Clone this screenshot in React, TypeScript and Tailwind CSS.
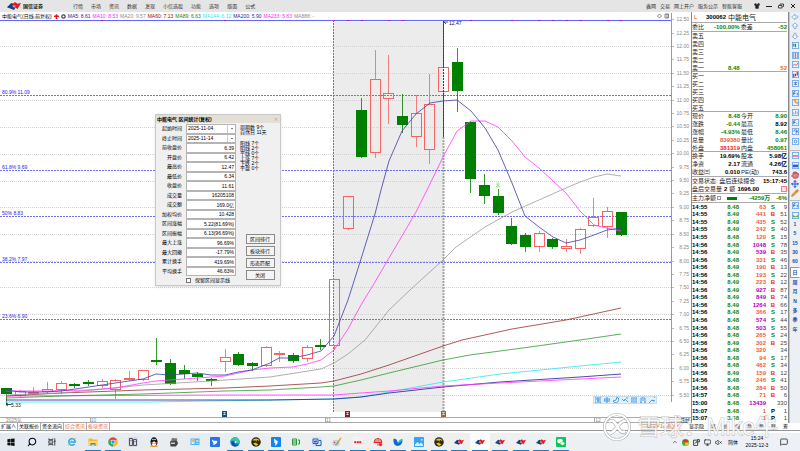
import { ReactNode } from "react";
import {
  ArrowBigDown,
  ArrowBigLeft,
  ArrowBigUp,
  ChevronUp,
  Hand,
  MessageSquare,
  Monitor,
  Move,
  Pencil,
  Search,
  Shirt,
  VolumeX,
} from "lucide-react";

const leftMenu = ["行情", "市场", "资讯", "数据", "发现", "小信选股", "功能", "选项", "版面", "公式"];
const rightMenu = ["鑫网", "交易", "网上开户", "服务公示", "智能客服"];

const averages = [
  { label: "MA5: 8.61", color: "text-[#1c1c96]" },
  { label: "MA10: 8.53", color: "text-[#ff1cff]" },
  { label: "MA20: 9.57", color: "text-[#8c8c8c]" },
  { label: "MA60: 7.13", color: "text-[#8e1010]" },
  { label: "MA89: 6.63", color: "text-[#0c860c]" },
  { label: "MA144: 6.12", color: "text-[#18f0f0]" },
  { label: "MA200: 5.90", color: "text-[#1c1c96]" },
  { label: "MA233: 5.83", color: "text-[#ff1cff]" },
  { label: "MA888: -", color: "text-[#8c8c8c]" },
];

// up, body top, body bottom, high, low
const candles: [boolean, number, number, number, number][] = [
  [false, 388, 394, 388, 404],
  [true, 391, 396, 390, 397],
  [true, 392, 394, 387, 395],
  [true, 389, 392, 382, 394],
  [true, 383, 390, 381, 394],
  [false, 384, 386, 383, 388],
  [false, 382, 384, 380, 386],
  [true, 381, 386, 379, 388],
  [true, 380, 390, 379, 399],
  [true, 378, 379, 371, 381],
  [true, 370, 380, 370, 381],
  [false, 360, 362, 338, 365],
  [false, 363, 384, 359, 385],
  [false, 370, 374, 365, 379],
  [false, 374, 377, 372, 381],
  [false, 379, 381, 378, 386],
  [true, 357, 362, 349, 372],
  [false, 354, 365, 352, 366],
  [false, 363, 366, 362, 371],
  [true, 347, 366, 346, 367],
  [true, 353, 355, 351, 362],
  [false, 355, 361, 353, 363],
  [true, 347, 359, 345, 362],
  [false, 345, 347, 339, 350],
  [true, 279, 346, 279, 350],
  [true, 196, 229, 196, 230],
  [false, 110, 157, 98, 158],
  [true, 79, 153, 50, 158],
  [true, 93, 99, 55, 124],
  [false, 116, 125, 94, 133],
  [true, 113, 137, 95, 147],
  [true, 104, 150, 74, 164],
  [true, 67, 92, 21, 137],
  [false, 62, 91, 48, 112],
  [false, 122, 179, 121, 193],
  [false, 185, 196, 174, 204],
  [false, 196, 213, 189, 215],
  [false, 226, 244, 218, 245],
  [false, 235, 247, 233, 252],
  [true, 233, 247, 231, 252],
  [false, 239, 247, 238, 249],
  [true, 246, 249, 239, 252],
  [true, 229, 249, 228, 254],
  [true, 217, 226, 198, 227],
  [true, 211, 227, 207, 238],
  [false, 212, 235, 212, 236],
];

const maLines = [
  { color: "#28e8f0", points: "6,402 150,402 270,400 334,399 361,397 389,392 443,382 500,374 580,366 621,362" },
  { color: "#1c1c96", points: "6,400 150,400 270,400 334,399 361,397 389,393 443,387 500,382 580,377 621,374" },
  { color: "#ff38ff", points: "6,396 225,395 334,395 361,393 389,391 443,386 500,383 560,380 621,377" },
  { color: "#2f9a2f", points: "6,398 61,396 143,394 225,391 270,390 321,387 334,386 361,380 389,373 443,360 470,355 530,347 580,340 621,334" },
  { color: "#9c3030", points: "6,396 61,393 143,390 225,388 270,386 321,383 334,381 361,374 389,365 443,346 462,340 512,329 566,320 621,308" },
  {
    color: "#9a9a9a",
    points:
      "6,395 61,393 115,388 143,385 211,381 270,377 321,369 334,363 348,354 365,340 389,310 410,290 443,260 456,247 485,227 512,212 539,200 566,188 580,182 594,177 607,174 621,176",
  },
  {
    color: "#ff38ff",
    points:
      "6,391 47,391 88,390 115,388 143,383 156,381 184,379 211,377 225,376 252,370 270,368 293,367 307,364 321,360 334,350 348,329 361,305 375,282 389,258 402,236 416,212 427,190 443,157 457,131 471,121 485,121 498,127 512,141 525,157 539,168 553,181 566,193 580,211 594,225 607,228 621,231",
  },
  {
    color: "#3c3ca4",
    points:
      "6,390 20,392 47,392 61,391 75,389 102,385 129,381 143,379 156,374 170,375 197,373 211,375 225,375 238,372 252,370 270,363 279,358 293,358 307,355 321,351 334,336 348,300 361,259 375,214 381,190 389,161 402,131 416,114 430,103 443,101 457,100 471,111 485,128 498,150 512,183 525,216 539,227 553,237 566,243 580,240 594,235 607,230 621,228",
  },
];

const fibs = [
  { y: 95, label: "80.9% 11.09" },
  { y: 170, label: "61.8% 9.69" },
  { y: 216, label: "50% 8.83" },
  { y: 262, label: "38.2% 7.97" },
  { y: 319, label: "23.6% 6.90" },
];

const gridLines = [46, 73, 100, 127, 154, 181, 207, 234, 261, 287, 314, 341, 368, 395];
const topDots = [101, 224, 333, 347, 361, 388, 402, 470, 511, 538, 552, 566, 580, 607, 620];
const prices = Array.from({ length: 29 }, (_, i) => (12.5 - i * 0.25).toFixed(2));

const stats = [
  ["前收盘价", "6.39"],
  ["开盘价", "6.42"],
  ["最高价", "12.47"],
  ["最低价", "6.34"],
  ["收盘价", "11.61"],
  ["成交量", "16205108"],
  ["成交额", "169.0亿"],
  ["加权均价", "10.428"],
  ["区间涨幅", "5.22(81.69%)"],
  ["区间振幅", "6.13(96.69%)"],
  ["最大上涨", "96.69%"],
  ["最大回撤", "-17.79%"],
  ["累计换手", "419.69%"],
  ["平均换手", "46.63%"],
];

const quotes = [
  ["现价", "8.48", "text-[#0a860a]", "今开", "8.90", "text-[#0a860a]"],
  ["涨跌", "-0.44", "text-[#0a860a]", "最高", "8.92", "text-black"],
  ["涨幅", "-4.93%", "text-[#0a860a]", "最低", "8.46", "text-[#0a860a]"],
  ["总量", "839380", "text-[#f0622a]", "量比", "0.97", "text-[#0a860a]"],
  ["外盘", "381319", "text-[#f01c1c]", "内盘", "458061", "text-[#0a860a]"],
];

const basics = [
  ["换手", "19.69%", "text-black", "股本", "5.98亿", "text-black"],
  ["净资", "2.17", "text-black", "流通", "4.26亿", "text-black"],
  ["收益㈢", "0.010", "text-black", "PE(动)", "743.6", "text-black"],
];

const ticks: [string, string, number, string, number][] = [
  ["14:55", "8.48", 63, "S", 9],
  ["14:55", "8.49", 441, "B", 51],
  ["14:55", "8.49", 435, "S", 52],
  ["14:55", "8.49", 242, "S", 40],
  ["14:55", "8.48", 120, "S", 15],
  ["14:56", "8.48", 1048, "S", 78],
  ["14:56", "8.49", 539, "B", 35],
  ["14:56", "8.48", 331, "S", 46],
  ["14:56", "8.49", 190, "B", 13],
  ["14:56", "8.48", 193, "S", 22],
  ["14:56", "8.49", 223, "B", 12],
  ["14:56", "8.49", 927, "B", 87],
  ["14:56", "8.49", 849, "B", 74],
  ["14:56", "8.49", 1264, "B", 66],
  ["14:56", "8.48", 366, "S", 17],
  ["14:56", "8.48", 574, "S", 44],
  ["14:56", "8.48", 503, "S", 55],
  ["14:56", "8.48", 265, "S", 24],
  ["14:56", "8.49", 302, "B", 25],
  ["14:56", "8.48", 320, "", 34],
  ["14:56", "8.48", 94, "S", 17],
  ["14:56", "8.48", 462, "S", 34],
  ["14:56", "8.49", 159, "B", 12],
  ["14:56", "8.48", 246, "S", 41],
  ["14:56", "8.48", 284, "B", 50],
  ["14:57", "8.48", 71, "B", 6],
  ["15:00", "8.48", 13439, "", 330],
  ["15:07", "8.48", 1, "P", 1],
  ["15:07", "8.48", 1, "P", 1],
];

const sideColor: Record<string, string> = {
  S: "text-[#0a860a]",
  B: "text-[#f01c1c]",
  P: "text-black",
};

const BrandMark = ({ className }: { className: string }) => (
  <svg viewBox="0 0 16 9" className={className}>
    <path d="M0 6 5 1l3 1-1 3 3 1-2 3z" fill="#17427f" />
    <path d="M6 3 9 0l3 2 4-1-4 7-3-2z" fill="#e31b23" />
    <path d="m7 3 3 1-1 3-3-2z" fill="#fff" opacity=".35" />
  </svg>
);

const TitleBar = () => (
  <header className="flex h-3 items-center bg-[#e5e5e5] text-[5px] leading-none text-[#333]">
    <BrandMark className="ml-1.5 h-2 w-4" />
    <span className="ml-px w-[50px] font-bold text-[#222]">国信证券</span>
    <nav className="flex gap-2">
      {leftMenu.map((item) => (
        <a key={item} href="#">
          {item}
        </a>
      ))}
    </nav>
    <nav className="ml-auto mr-3 flex gap-1">
      {rightMenu.map((item) => (
        <a key={item} href="#">
          {item}
        </a>
      ))}
    </nav>
    <div className="mr-1 flex items-center gap-1.5">
      <button aria-label="皮肤">
        <Shirt className="size-1.5 fill-[#222]" />
      </button>
      <button aria-label="最小化">
        <svg viewBox="0 0 6 6" className="size-1.5" stroke="#222">
          <path d="M0 3.5h6" />
        </svg>
      </button>
      <button aria-label="还原">
        <svg viewBox="0 0 6 6" className="size-1.5" stroke="#222" fill="none" strokeWidth=".8">
          <path d="M.5 2.500h3.500v2.500h-3.500zM2 2V1h3.500v2.500H4.500" />
        </svg>
      </button>
      <button aria-label="关闭">
        <svg viewBox="0 0 6 6" className="size-1.5" stroke="#222">
          <path d="m1 1 4 4M5 1 1 5" />
        </svg>
      </button>
    </div>
  </header>
);

const KLineChart = () => (
  <svg viewBox="0 20 671 397" className="block w-full">
    <rect x="333" y="22" width="111" height="390" fill="#ececec" />
    {gridLines.map((y) => (
      <path key={y} d={`M0 ${y + 0.5}H671`} stroke="#c9c9c9" strokeWidth=".8" strokeDasharray="1 1" />
    ))}
    {fibs.map(({ y, label }) => (
      <g key={y}>
        <path d={`M0 ${y + 0.5}H671`} stroke="#7070f4" strokeDasharray="2 1" />
        <text x="2" y={y - 1} fontSize="5" fill="#2424ee">
          {label}
        </text>
      </g>
    ))}
    <path d="M0 20.500H671" stroke="#6464ff" />
    {topDots.map((x) => (
      <rect key={x} x={x} y="20" width="2" height="1" fill="#c000e0" />
    ))}
    <path d="M333.500 20V412" stroke="#777" strokeDasharray="2 1" />
    <path d="M443.500 137V412" stroke="#888" strokeWidth="2" strokeDasharray="2 1" opacity=".7" />
    {candles.map(([up, top, bottom, high, low], i) => {
      const x = Math.round(6 + i * 13.66);
      const color = up ? "#f46464" : "#008000";
      return (
        <g key={i} stroke={color} strokeWidth="1">
          <path d={`M${x + 0.5} ${high}V${top}M${x + 0.5} ${bottom}V${low}`} opacity=".8" />
          <rect
            x={x - 4.5}
            y={top + 0.5}
            width="10"
            height={Math.max(bottom - top - 1, 1)}
            fill={up ? "none" : color}
          />
        </g>
      );
    })}
    <path d="M443.500 21V67M443.500 93V137" stroke="#d42020" />
    <path d="M443.500 21V137" stroke="#8c2020" strokeDasharray="2 1" />
    {maLines.map(({ color, points }) => (
      <polyline key={points} points={points} fill="none" stroke={color} strokeWidth=".8" />
    ))}
    <path d="M444 22h4M444 22l2 2" stroke="#222" strokeWidth=".8" />
    <text x="449" y="25" fontSize="5" fill="#111">
      12.47
    </text>
    <path d="M6 404.500h5M6 404.500l2-1.500M6 404.500l2 1.500" stroke="#222" strokeWidth=".8" fill="none" />
    <text x="11" y="407" fontSize="5" fill="#111">
      5.33
    </text>
    <g stroke="#70f070" fill="none" strokeWidth=".8">
      <circle cx="498" cy="184" r="1.200" />
      <path d="m496 187 2-2 2 2z" />
    </g>
    {[
      [222, "#1d4a7c"],
      [345, "#8c1c24"],
      [441, "#9a6838"],
    ].map(([x, fill]) => (
      <g key={x}>
        <rect x={x} y="411" width="5" height="6" fill={fill as string} />
        <path d={`M${Number(x) + 1} 412.500h3M${Number(x) + 1} 414.500h3M${Number(x) + 2.5} 412v3`} stroke="#fff" strokeWidth=".5" />
      </g>
    ))}
  </svg>
);

const StatsDialog = () => (
  <section className="absolute left-[155px] top-[94px] flex w-[126px] flex-col border border-[#c8c8c8] bg-[#f0f0f0] text-[5px] leading-none text-black shadow-sm">
    <h2 className="flex h-2 items-center justify-between bg-[#e4dfd6] px-px font-bold">
      中能电气 区间统计(复权)
      <button aria-label="关闭窗口" className="pr-px font-normal text-[#aaa]">
        ✕
      </button>
    </h2>
    <div className="flex">
      <div className="grid h-[153px] w-[80px] auto-rows-fr grid-cols-[26px_50px] gap-x-1 pt-px">
        {[
          ["起始时间", "2025-11-04"],
          ["终止时间", "2025-11-14"],
        ].map(([label, value]) => (
          <label key={label} className="col-span-2 grid grid-cols-subgrid items-center text-right">
            {label}
            <span className="relative flex h-full border border-[#b4b4b4] bg-white">
              <select className="w-full appearance-none pl-px text-[5px] leading-none">
                <option>{value}</option>
              </select>
              <i className="pointer-events-none absolute inset-y-0 right-0 flex w-2 items-center justify-center border-l border-[#ccc]">
                <svg viewBox="0 0 4 2" className="h-px w-0.5">
                  <path d="M0 0h4L2 2z" />
                </svg>
              </i>
            </span>
          </label>
        ))}
        {stats.map(([label, value]) => (
          <label key={label} className="col-span-2 grid grid-cols-subgrid items-center text-right">
            {label}
            <input
              readOnly
              defaultValue={value}
              className="h-full w-full min-w-0 border border-[#b4b4b4] bg-white px-px text-right text-[5px] leading-none"
            />
          </label>
        ))}
      </div>
      <div className="flex flex-1 flex-col pl-1 pt-0.5">
        <p>周期数 9个</p>
        <p>自然日 11天</p>
        <div className="mt-1.5">
          {["阳线 7个", "阴线 2个", "平线 0个", "上涨 7个", "下跌 2个", "平盘 0个"].map((line) => (
            <p key={line}>{line}</p>
          ))}
        </div>
        <div className="mt-auto flex w-[29px] translate-y-1 flex-col gap-0.5 self-center">
          {["区间排行", "板块排行", "形态匹配", "关闭"].map((item) => (
            <button key={item} className="h-2.5 border border-[#8a8a8a] bg-[#f4f4f4]">
              {item}
            </button>
          ))}
        </div>
      </div>
    </div>
    <label className="flex h-[9px] items-center gap-1 pl-[30px]">
      <input type="checkbox" className="size-[5px] appearance-none border border-[#777] bg-white" />
      保留区间显示线
    </label>
  </section>
);

const DrawTools = () => (
  <div className="absolute bottom-[13px] right-[14px] flex h-2 items-center gap-[3px] border border-[#c4dcf4] bg-[#e4f1fd] px-px">
    {[
      "M0 0h6v6H0zM1 2h4M2 4h3M3 1v4",
      "M3 0v6M0 2h6v2H0z",
      "M4 0a3 3 0 1 1-4 4 4 4 0 0 0 4-4",
      "M0 2l2 2 1-2 3 3M4 1h2",
      "M0 1h6v4H0zM1 3h4",
      "M1 6V1h4v5M2 3h2M0 6h2M4 6h2",
      "M0 6l3-3M3 3a2 2 0 1 0 2-3M3 3l2 1",
    ].map((d) => (
      <svg key={d} viewBox="0 0 6 6" className="size-1.5" fill="none" stroke="#3b8ee0" strokeWidth=".9">
        <path d={d} />
      </svg>
    ))}
  </div>
);

const QuoteRows = ({ rows }: { rows: string[][] }) => (
  <>
    {rows.map(([a, av, ac, b, bv, bc]) => (
      <div key={a} className="flex h-2 items-center whitespace-nowrap">
        <span className="flex w-[48px] justify-between">
          {a}
          <b className={ac}>{av}</b>
        </span>
        <span className="ml-px flex flex-1 justify-between">
          {b}
          <b className={bc}>{bv}</b>
        </span>
      </div>
    ))}
  </>
);

const QuotePanel = () => (
  <aside className="flex w-[98px] shrink-0 flex-col border-x border-[#8c8c8c] pr-px text-[6px] leading-none text-[#222]">
    <h1 className="flex h-[11px] items-center border-b border-[#aaa] pl-0.5">
      <span className="w-3 text-[#f03c3c]">L</span>
      <b className="mr-0.5 text-black">300062</b>
      <span className="text-[7px]">中能电气</span>
    </h1>
    <div className="flex h-[9px] items-center border-b border-[#aaa]">
      委比
      <b className="ml-2.5 mr-px text-[#0a860a]">-100.00%</b>
      委差
      <b className="ml-auto text-[#0a860a]">-52</b>
    </div>
    <div className="h-10 border-b border-[#aaa]">
      {["五", "四", "三", "二", "一"].map((n) => (
        <div key={n} className="flex h-2 items-center">
          <span className="w-[36px]">卖{n}</span>
          {n === "一" && (
            <>
              <b className="flex-1 text-[#0a860a]">8.48</b>
              <b className="text-[#f0622a]">52</b>
            </>
          )}
        </div>
      ))}
    </div>
    <div className="h-10 border-b border-[#aaa]">
      {["一", "二", "三", "四", "五"].map((n) => (
        <div key={n} className="flex h-2 items-center">
          买{n}
        </div>
      ))}
    </div>
    <div className="h-10 border-b border-[#aaa]">
      <QuoteRows rows={quotes} />
    </div>
    <div className="border-b border-[#aaa]">
      <QuoteRows rows={basics} />
    </div>
    <div className="border-b border-[#aaa]">
      <p className="flex h-2 items-center justify-between whitespace-nowrap">
        交易状态: 盘后连续撮合 <b className="text-black">15:17:45</b>
      </p>
      <p className="flex h-2 items-center gap-0.5">
        盘后交易量 <b className="text-black">2</b> 额 <b className="text-black">1696.00</b>
        <i className="ml-auto size-1.5 border border-[#f08080] bg-[#fbdcdc]" />
      </p>
    </div>
    <div className="flex h-[9px] items-center border-b border-[#aaa]">
      主力净额
      <i className="ml-px size-1 border border-[#999]" />
      <i className="ml-1.5 h-[3px] w-2.5 bg-[#008000]" />
      <b className="ml-auto text-[#0a860a]">-4259万</b>
      <b className="ml-1.5 text-[#0a860a]">-6%</b>
    </div>
    <table className="h-[219px] w-full table-fixed leading-none">
      <tbody>
        {ticks.map(([time, price, volume, side, count], i) => (
          <tr key={i}>
            <td className="w-[24px] p-0 font-bold text-black">{time}</td>
            <td className="w-[23px] p-0 text-right font-bold text-[#0a860a]">{price}</td>
            <td
              className={
                volume > 500
                  ? "w-[27px] p-0 text-right font-bold text-[#b400c0]"
                  : "w-[27px] p-0 text-right font-bold text-[#f0622a]"
              }
            >
              {volume}
            </td>
            <td className={`w-[9px] p-0 text-right font-bold ${sideColor[side] ?? ""}`}>{side}</td>
            <td className="p-0 text-right text-[#444]">{count}</td>
          </tr>
        ))}
      </tbody>
    </table>
  </aside>
);

const box = (children: ReactNode) => (
  <svg viewBox="0 0 8 8" className="size-[7px]" fill="none">
    <rect x=".5" y=".5" width="7" height="7" fill="#eaf4ff" stroke="#74a8e4" />
    {children}
  </svg>
);

const arrow = "size-2 fill-white text-[#4a8ad8]";

const toolsTop: [string, ReactNode][] = [
  ["返回", <ArrowBigLeft className={arrow} />],
  ["上一个", <ArrowBigUp className={arrow} />],
  ["下一个", <ArrowBigDown className={arrow} />],
  ["行情表", box(<path d="M2 2v3M4 2v4" stroke="#1c9a3c" strokeWidth="1.400" />)],
  ["分类", box(<path d="M2 1v6M4 1v6M6 1v6" stroke="#e05a70" />)],
  ["分时", box(<path d="m1 5 2-1 2 1 2-3" stroke="#e05050" />)],
  ["K线", box(<path d="M2 3v4M4 3v3M6 1v4" stroke="#c02020" strokeWidth="1.300" />)],
  ["明细", box(<path d="M2 3h4M2 5h4M4 2v4" stroke="#4a7cc0" />)],
  ["资料", box(<path d="M2 6V2h2M2 4h2M6 3v3" stroke="#2c6cd0" />)],
  ["图形", box(<path d="M2 2h2v2h2v2" stroke="#f0a030" strokeWidth="1.500" />)],
  ["资金", box(<path d="M2 6V4M4 6V2M6 6V3" stroke="#f08030" />)],
  ["公告", box(<path d="M2 6V2h2M2 4h2M5 5h1" stroke="#2c6cd0" />)],
  ["统计", box(<path d="M2 4a2 2 0 1 1 2 2M4 4h2" stroke="#2c6cd0" />)],
  ["设置", box(<circle cx="4" cy="4" r="1.500" stroke="#2c8ce0" />)],
];

const toolsMiddle: [string, ReactNode][] = [
  ["画线", box(<path d="M1 4h6M1 5h6" stroke="#e07080" />)],
  ["复权", box(<path d="M1 3h6v3H1z" fill="#3858c8" />)],
  ["拖动", <Hand className="size-2 fill-[#d88080] text-[#b03040]" />],
  ["移动", <Move className="size-2 text-[#2458c8]" strokeWidth={3} />],
  ["编辑", <Pencil className="size-2 fill-[#f0a030] text-[#c07020]" />],
];

const toolsBottom: [string, ReactNode][] = [
  ["F5", box(<path d="M2 6V2h2M2 4h2M6 3v3" stroke="#2c6cd0" />)],
  ["缩放", box(<path d="M1 3l3 2 3-2v3H1z" fill="#58b838" />)],
  ...["1", "5", "15", "30", "60", "日", "周", "月", "N", "多", "季", "年"].map(
    (t) => [t, t] as [string, ReactNode],
  ),
];

const ToolGroup = ({ items, className }: { items: [string, ReactNode][]; className: string }) => (
  <div className={`flex flex-col ${className}`}>
    {items.map(([name, icon]) => (
      <button
        key={name}
        aria-label={name}
        className={
          name === "日"
            ? "flex flex-1 items-center justify-center border border-[#999] border-r-white bg-white"
            : "flex flex-1 items-center justify-center"
        }
      >
        {icon}
      </button>
    ))}
  </div>
);

const SideTools = () => (
  <div className="flex w-[11px] shrink-0 flex-col border-l border-[#c4c4c4] bg-[#eceff4] text-[5px] font-bold leading-none text-[#2450a0]">
    <ToolGroup items={toolsTop} className="h-[134px]" />
    <ToolGroup items={toolsMiddle} className="mt-1 h-[48px] border-t border-[#bbb]" />
    <ToolGroup items={toolsBottom} className="mt-0.5 h-[134px] border-t border-[#bbb]" />
  </div>
);

const tile = (fill: string, children?: ReactNode) => (
  <svg viewBox="0 0 20 20" className="size-2.5" fill="none">
    <rect width="20" height="20" rx="2" fill={fill} />
    {children}
  </svg>
);

const bird = <path d="M4 5c4 4 6 2 11 3-1 6-6 9-10 7 2-1 3-2 2-3-2-2-3-4-3-7" fill="#fff" />;

const smiley = (
  <svg viewBox="0 0 20 20" className="size-2.5">
    <circle cx="10" cy="10" r="9.500" fill="#2c260c" />
    <path d="M3 7a8 8 0 0 1 14 0l-5 3-3-3zM4 13l5-2 6 4-5 3z" fill="#e8c020" />
    <circle cx="13" cy="8" r="2" fill="#222" />
  </svg>
);

const taskIcons: [string, ReactNode][] = [
  [
    "开始",
    <svg viewBox="0 0 20 20" className="size-2">
      <path d="M1 3l8-1v8H1zM10 2l9-1v9h-9zM1 11h8v8l-8-1zM10 11h9v9l-9-1z" fill="#111" />
    </svg>,
  ],
  ["搜索", <Search className="size-2.5 -scale-x-100 text-black" strokeWidth={2.5} />],
  [
    "任务视图",
    <svg viewBox="0 0 20 20" className="size-2" fill="none" stroke="#222" strokeWidth="2">
      <path d="M2 1v3h10V1M2 19v-3h10v3M2 7h10v6H2zM17 1v18M15 8h4" />
    </svg>,
  ],
  [
    "Internet Explorer",
    <svg viewBox="0 0 20 20" className="size-2.5" fill="none">
      <path d="M15 14a6.500 6.500 0 1 1 1.500-4H5" stroke="#28a8ea" strokeWidth="3" />
      <path d="M3 18C-1 15 12 1 18 3" stroke="#f4c030" strokeWidth="1.800" />
    </svg>,
  ],
  [
    "文件",
    <svg viewBox="0 0 20 20" className="size-2.5">
      <path d="M1 3h7l2 2h9v13H1z" fill="#f5b82e" />
      <path d="M1 8h18v10H1z" fill="#ffd766" />
      <path d="M5 12h10v6h-2v-3H7v3H5z" fill="#3a8ee0" />
    </svg>,
  ],
  [
    "Chrome",
    <svg viewBox="0 0 20 20" className="size-2.5">
      <path d="M10 10 1.800 5.200a9.500 9.500 0 0 1 16.400 0z" fill="#ea4335" />
      <path d="M10 10V.5M10 10l8.200-4.800a9.500 9.500 0 0 1-8.200 14.300z" fill="#fbbc05" />
      <path d="m10 10 0 9.500A9.500 9.500 0 0 1 1.800 5.200z" fill="#34a853" />
      <circle cx="10" cy="10" r="4.500" fill="#fff" />
      <circle cx="10" cy="10" r="3.500" fill="#4285f4" />
    </svg>,
  ],
  ["词典", tile("#d8dade", <path d="M3 3h6v14H3zM11 5h6v12h-6zM5 7h2M13 9h2" stroke="#54506c" strokeWidth="2" />)],
  [
    "QQ",
    <svg viewBox="0 0 20 20" className="size-2.5">
      <ellipse cx="10" cy="10" rx="7" ry="9.500" fill="#111" />
      <ellipse cx="10" cy="14" rx="4.500" ry="4.500" fill="#fff" />
      <path d="M4 10c4 3 8 3 12 0v3H4z" fill="#e83030" />
      <ellipse cx="6" cy="18.500" rx="4" ry="1.500" fill="#f4a020" />
      <ellipse cx="14" cy="18.500" rx="4" ry="1.500" fill="#f4a020" />
      <circle cx="8" cy="5" r="1.500" fill="#fff" />
      <circle cx="12" cy="5" r="1.500" fill="#fff" />
      <path d="M7 8h6l-3 2z" fill="#f4a020" />
    </svg>,
  ],
  [
    "打印机",
    <svg viewBox="0 0 20 20" className="size-2.5">
      <path d="M6 2l11 1-3 7H3z" fill="#777" />
      <path d="M2 9l14-2 2 6-4 6H3z" fill="#444" />
      <path d="M4 11h8v3H4z" fill="#ccc" />
    </svg>,
  ],
  [
    "控制面板",
    <svg viewBox="0 0 20 20" className="size-2.5">
      <path d="M1 3h18v13H1z" fill="#58b4e8" />
      <path d="M3 5h6v9H3z" fill="#d8f0ff" />
      <path d="M12 6h5v1h-5zM12 9h5v1h-5zM12 12h5v1h-5z" fill="#fff" />
      <circle cx="6" cy="8" r="2" fill="#e8b020" />
    </svg>,
  ],
  ["飞书", tile("#2474ec", bird)],
  [
    "Edge",
    <svg viewBox="0 0 20 20" className="size-2.5">
      <circle cx="10" cy="10" r="9.500" fill="#1878d0" />
      <path d="M1 8C3-2 18-2 19.500 9c0 4-5 5-7 3 1-4-6-7-11.500-4" fill="#38c8a8" />
      <path d="M9 9c-3 4 1 9 8 7-4 5-11 3-13-2-1-3 2-6 5-5" fill="#0c4c98" />
      <circle cx="11" cy="10" r="2" fill="#fff" />
    </svg>,
  ],
  ["行情助手", smiley],
  ["钉钉", tile("#1484f0", <path d="M6 3l9 7-3 1 1 2-5 5 1-5-2-1z" fill="#fff" />)],
  ["表格", tile("#e4f4e4", <path d="M3 4h8v12H3zM3 8h8M3 12h8M14 6h3v8h-3" stroke="#2c9440" strokeWidth="2" />)],
  ["文字", tile("#d8e4f8", <path d="M2 4h10v9H2zM4 7l2 4 2-4 2 4M13 7h5v10H8v-3" stroke="#2a60b8" strokeWidth="2" />)],
  [
    "画图",
    <svg viewBox="0 0 20 20" className="size-2.5">
      <ellipse cx="8" cy="12" rx="7.500" ry="6.500" fill="#b8d8ec" />
      <circle cx="5" cy="11" r="1.500" fill="#e04040" />
      <circle cx="8" cy="15" r="1.500" fill="#40a850" />
      <path d="m8 13 9-12 2 1-8 13z" fill="#e89030" />
    </svg>,
  ],
  ["财经", tile("#f8f0f0", <path d="M3 9h3v3H3zM8 9h3v3H8zM13 9h3v3h-3z" fill="#e02030" stroke="#e02030" />)],
  [
    "天气",
    <svg viewBox="0 0 20 20" className="size-2.5" fill="none" stroke="#e02828" strokeWidth="2">
      <path d="M2 11a8 8 0 0 1 16 0zM10 4v7M6 6v5M14 6v5M10 13v4" />
      <circle cx="15" cy="15" r="2.500" fill="#e02828" />
    </svg>,
  ],
  [
    "看图",
    <svg viewBox="0 0 20 20" className="size-2.5">
      <path d="M1 4c6-3 8 5 9 8l8-8c3 8-3 14-9 14C4 18 0 13 1 4" fill="#1464e0" />
      <path d="M10 12c1-5 5-8 9-8 0 3-3 7-9 8" fill="#20c8a0" />
    </svg>,
  ],
  ["照片", tile("#38a4f0", <path d="M2 15l5-5 4 4 3-3 4 4v3H2zM14 4h3v3h-3z" fill="#d4f0ff" />)],
  ["行情助手二", smiley],
  ...["一", "二", "三", "四", "五"].map(
    (n) => [`国信证券${n}`, <BrandMark className="h-2 w-2.5" />] as [string, ReactNode],
  ),
  [
    "微信",
    tile(
      "#10c45c",
      <>
        <ellipse cx="8" cy="8" rx="5.500" ry="4.500" fill="#fff" />
        <ellipse cx="13" cy="13" rx="4.500" ry="3.500" fill="#fff" stroke="#10c45c" />
      </>,
    ),
  ],
];

const TaskBar = () => (
  <footer className="flex h-[18px] items-stretch bg-linear-to-r from-[#e3eaf2] via-[#edf0ee] to-[#eef0f8] text-[6px] leading-none text-black">
    <div className="flex w-5/7 pl-px">
      {taskIcons.map(([name, icon], i) => (
        <button
          key={name}
          aria-label={name}
          className={i === 23 ? "flex flex-1 flex-col items-center bg-white/70" : "flex flex-1 flex-col items-center"}
        >
          <span className="flex flex-1 items-center">{icon}</span>
          <i className={i === 4 || i === 5 || i > 10 ? "h-px w-4 bg-[#1c7cc8]" : "h-px"} />
        </button>
      ))}
    </div>
    <div className="ml-auto flex items-center gap-1 pr-3">
      <ChevronUp className="size-1.5" />
      <svg viewBox="0 0 12 12" className="size-[7px]">
        <circle cx="6" cy="6" r="6" fill="#40b030" />
        <path d="M1 3a6 6 0 0 1 10 1L6 7z" fill="#e03030" />
        <path d="M5 6h7a6 6 0 0 1-6 6z" fill="#f4c020" />
      </svg>
      <svg viewBox="0 0 12 12" className="size-[7px]" fill="none" stroke="#333" strokeWidth="1.500">
        <path d="M1 2h7v9H1zM5 5h6V1H7M3 8l3-3" />
      </svg>
      <Monitor className="size-[7px]" />
      <VolumeX className="size-[7px]" />
      <span className="px-0.5 text-[5px]">简体</span>
      <time className="flex w-[26px] flex-col items-center gap-0.5 whitespace-nowrap text-[5px]">
        <span>15:24</span>
        <span>2025-12-3</span>
      </time>
      <MessageSquare className="ml-1.5 size-2" />
    </div>
  </footer>
);

const BottomTabs = () => (
  <div className="flex h-2 items-stretch border-b border-[#999] text-[5px] leading-none">
    {["扩展∧", "关联报价", "资金流向", "综合资讯", "板块资讯"].map((tab, i) => (
      <button
        key={tab}
        className={i > 2 ? "border-r border-[#aaa] px-px text-[#f0622a]" : "border-r border-[#aaa] px-px text-black"}
      >
        {tab}
      </button>
    ))}
    <div className="ml-auto flex items-center gap-[7px] pr-3">
      <span className="text-[#f0622a]">图文F10 侧边栏</span>
      {["显示隐", "笔", "价", "细", "盘", "势", "联", "筹"].map((item) => (
        <button key={item}>{item}</button>
      ))}
    </div>
  </div>
);

const Watermark = () => (
  <div className="pointer-events-none absolute bottom-2.5 right-[22px] flex items-center gap-1.5 text-[23px] leading-none text-white/80 [-webkit-text-stroke:1px_#8888] [paint-order:stroke]">
    <svg viewBox="0 0 28 28" className="size-7" fill="none">
      <circle cx="14" cy="14" r="12.500" stroke="#999" strokeOpacity=".7" strokeWidth="3" />
      <circle cx="14" cy="14" r="12.500" stroke="#fff" strokeWidth="1.800" />
      <path d="M6 9c3-3 6 0 8 4s5 8 8 5M7 20c3 0 5-3 7-6s4-6 8-6" stroke="#999" strokeOpacity=".7" strokeWidth="4" />
      <path d="M6 9c3-3 6 0 8 4s5 8 8 5M7 20c3 0 5-3 7-6s4-6 8-6" stroke="#fff" strokeWidth="2.500" />
    </svg>
    <span className="whitespace-nowrap">雪球：Mike牛</span>
  </div>
);

const App = () => (
  <div className="relative flex min-h-screen flex-col overflow-hidden bg-white font-['Liberation_Sans','Noto_Sans_CJK_SC',sans-serif]">
    <TitleBar />
    <main className="flex">
      <div className="flex min-w-0 flex-1 flex-col">
        <div className="flex">
          <div className="relative min-w-0 flex-1">
            <div className="flex h-2 items-center gap-0.5 whitespace-nowrap pl-0.5 text-[5px] leading-none">
              <span className="text-black">中能电气(日线.前复权)</span>
              <svg viewBox="0 0 6 6" className="size-[5px]">
                <path d="M3 0l2 2H1zM0 2h6v1.500H0zM2 2h2v4H2z" fill="#f01818" />
              </svg>
              <svg viewBox="0 0 6 6" className="size-[5px]">
                <circle cx="3" cy="3" r="2" fill="none" stroke="#444" strokeWidth="1.500" />
              </svg>
              {averages.map(({ label, color }) => (
                <span key={label} className={color}>
                  {label}
                </span>
              ))}
              <svg viewBox="0 0 12 6" className="ml-auto mr-0.5 h-1.5 w-3" fill="none" stroke="#555" strokeWidth=".7">
                <path d="m2.500 1 2 2-2 2-2-2zM8 1h3.500v4H8zM10 1v4" />
              </svg>
            </div>
            <div className="relative">
              <KLineChart />
              <StatsDialog />
              <DrawTools />
            </div>
          </div>
          <ul className="mb-[15px] mt-px flex w-[20px] shrink-0 flex-col text-[5px] leading-none text-[#888]">
            {prices.map((p) => (
              <li key={p} className="flex flex-1 items-center justify-between border-l border-[#999] pr-0.5">
                <i className="h-px w-[2px] bg-[#bbb]" />
                {p}
              </li>
            ))}
          </ul>
        </div>
        <div className="flex h-1.5 items-center border-y border-[#aaa] text-[5px] leading-none text-[#888]">
          <span className="w-[13%] pl-1.5">2025年</span>
          <span className="w-[34%] border-l border-[#aaa]">10</span>
          <span className="w-[39%] border-l border-[#aaa]">11</span>
          <span className="border-l border-[#aaa]">12</span>
          <span className="ml-auto pr-px text-black">日线</span>
        </div>
      </div>
      <QuotePanel />
      <SideTools />
    </main>
    <BottomTabs />
    <div className="mt-auto">
      <TaskBar />
    </div>
    <Watermark />
  </div>
);

export default App;
